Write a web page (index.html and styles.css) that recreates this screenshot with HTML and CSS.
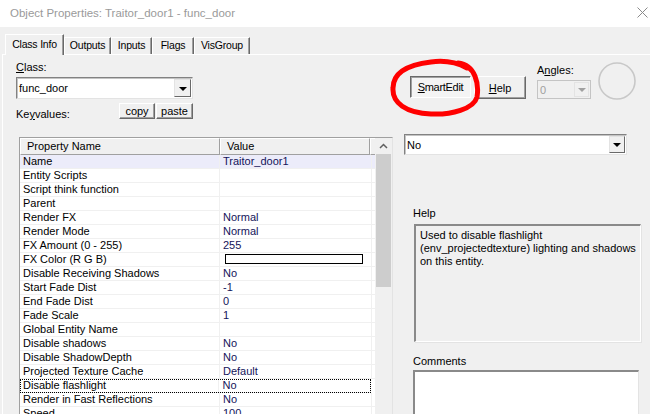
FILE: index.html
```html
<!DOCTYPE html>
<html>
<head>
<meta charset="utf-8">
<link rel="stylesheet" href="styles.css">
</head>
<body>
<div class="window">
  <div class="titlebar">
    <span class="title">Object Properties: Traitor_door1 - func_door</span>
    <svg class="close" width="11" height="11" viewBox="0 0 11 11"><path d="M0.5 0.5 L10.5 10.5 M10.5 0.5 L0.5 10.5" stroke="#8a8a8a" stroke-width="1"/></svg>
  </div>
  <div class="tabs">
    <div class="tab active t1">Class Info</div>
    <div class="tab t2">Outputs</div>
    <div class="tab t3">Inputs</div>
    <div class="tab t4">Flags</div>
    <div class="tab t5">VisGroup</div>
  </div>
  <div class="panel">
    <div class="top">
      <div class="classgroup">
        <div class="label"><u>C</u>lass:</div>
        <div class="combo classcombo">
          <span class="combo-text">func_door</span>
          <span class="combo-btn"><span class="arrow"></span></span>
        </div>
        <div class="kvrow">
          <span class="label">Ke<u>y</u>values:</span>
          <div class="kvbtns">
            <button class="btn small">copy</button>
            <button class="btn small">paste</button>
          </div>
        </div>
      </div>
      <div class="actions">
        <button class="btn pressed smartedit"><u>S</u>martEdit</button>
        <button class="btn helpbtn"><u>H</u>elp</button>
        <svg class="ring" width="100" height="65" viewBox="0 0 100 65"><path d="M72 6 C90 8 93 28 91 40 C88 52 65 58 45 57 C20 56 6 46 7 31 C7 16 20 8 45 5 C60 3 70 5 81 11" fill="none" stroke="#ff0000" stroke-width="5" stroke-linecap="round"/></svg>
      </div>
      <div class="angles">
        <div class="label">A<u>n</u>gles:</div>
        <div class="combo anglecombo">
          <span class="combo-text">0</span>
          <span class="combo-btn"><span class="arrow grey"></span></span>
        </div>
      </div>
      <svg class="dial" width="40" height="40" viewBox="0 0 40 40"><circle cx="20" cy="20" r="18" fill="none" stroke="#c8c8c8" stroke-width="1.6"/></svg>
    </div>
    <div class="bottom">
      <div class="list">
        <div class="list-body">
          <div class="list-head">
            <div class="hcell c1">Property Name</div>
            <div class="hcell c2">Value</div>
            <div class="hcell c3"></div>
          </div>
          <div class="row sel"><div class="c1">Name</div><div class="c2 v">Traitor_door1</div></div>
          <div class="row"><div class="c1">Entity Scripts</div><div class="c2 v"></div></div>
          <div class="row"><div class="c1">Script think function</div><div class="c2 v"></div></div>
          <div class="row"><div class="c1">Parent</div><div class="c2 v"></div></div>
          <div class="row"><div class="c1">Render FX</div><div class="c2 v">Normal</div></div>
          <div class="row"><div class="c1">Render Mode</div><div class="c2 v">Normal</div></div>
          <div class="row"><div class="c1">FX Amount (0 - 255)</div><div class="c2 v">255</div></div>
          <div class="row"><div class="c1">FX Color (R G B)</div><div class="c2 v"><span class="swatch"></span></div></div>
          <div class="row"><div class="c1">Disable Receiving Shadows</div><div class="c2 v">No</div></div>
          <div class="row"><div class="c1">Start Fade Dist</div><div class="c2 v">-1</div></div>
          <div class="row"><div class="c1">End Fade Dist</div><div class="c2 v">0</div></div>
          <div class="row"><div class="c1">Fade Scale</div><div class="c2 v">1</div></div>
          <div class="row"><div class="c1">Global Entity Name</div><div class="c2 v"></div></div>
          <div class="row"><div class="c1">Disable shadows</div><div class="c2 v">No</div></div>
          <div class="row"><div class="c1">Disable ShadowDepth</div><div class="c2 v">No</div></div>
          <div class="row"><div class="c1">Projected Texture Cache</div><div class="c2 v">Default</div></div>
          <div class="row focus"><div class="c1">Disable flashlight</div><div class="c2 v">No</div></div>
          <div class="row"><div class="c1">Render in Fast Reflections</div><div class="c2 v">No</div></div>
          <div class="row"><div class="c1">Speed</div><div class="c2 v">100</div></div>
        </div>
        <div class="scrollbar">
          <div class="sb-up"><svg width="9" height="6" viewBox="0 0 9 6"><path d="M1 5 L4.5 1.5 L8 5" fill="none" stroke="#606060" stroke-width="1.5"/></svg></div>
          <div class="sb-thumb"></div>
        </div>
      </div>
      <div class="side">
        <div class="combo valuecombo">
          <span class="combo-text">No</span>
          <span class="combo-btn"><span class="arrow"></span></span>
        </div>
        <div class="label sidelabel helplabel">Help</div>
        <div class="helpbox">Used to disable flashlight<br>(env_projectedtexture) lighting and shadows<br>on this entity.</div>
        <div class="label sidelabel commentslabel">Comments</div>
        <div class="comments"></div>
      </div>
    </div>
  </div>
</div>
</body>
</html>
```
FILE: styles.css
```css
* { box-sizing: border-box; }
html, body { margin: 0; padding: 0; }
body {
  width: 650px;
  height: 414px;
  overflow: hidden;
  background: #f0f0f0;
  font-family: "Liberation Sans", Arial, sans-serif;
  font-size: 11px;
  color: #000;
}
.window { width: 650px; height: 414px; overflow: hidden; }
.titlebar {
  height: 27px;
  background: #fff;
  display: flex;
  align-items: center;
  justify-content: space-between;
  padding: 0 2px 2px 10px;
}
.title { font-size: 11.5px; color: #9a9a9a; }
.close { display: block; }

.tabs {
  display: flex;
  align-items: flex-end;
  padding: 7px 0 0 5px;
  height: 27px;
}
.tab {
  height: 17px;
  line-height: 15px;
  text-align: center;
  border-top: 1px solid #fff;
  border-left: 1px solid #fff;
  border-right: 1px solid #696969;
  box-shadow: inset -1px 0 0 #a0a0a0;
  font-size: 10.5px;
  letter-spacing: -0.2px;
}
.t1 { width: 59px; }
.t2 { width: 47px; }
.t3 { width: 41px; }
.t4 { width: 42px; }
.t5 { width: 56px; }
.tab.active {
  height: 21px;
  line-height: 18px;
  margin-bottom: -1px;
  background: #f0f0f0;
  position: relative;
  z-index: 1;
}
.panel {
  border-top: 1px solid #fff;
  border-left: 1px solid #fff;
  margin-left: 2px;
  padding: 6px 0 0 13px;
}
.label { line-height: 13px; }
u { text-decoration: underline; text-underline-offset: 1px; }

.top { display: flex; align-items: flex-start; }
.classgroup { width: 177px; }
.combo {
  display: flex;
  align-items: stretch;
  background: #fff;
  border-top: 1px solid #828282;
  border-left: 1px solid #828282;
  border-right: 1px solid #e3e3e3;
  border-bottom: 1px solid #e3e3e3;
  box-shadow: inset 1px 1px 0 #c4c4c4;
}
.combo-text { flex: 1; padding: 0 2px; display: flex; align-items: center; }
.combo-btn {
  width: 17px;
  margin: 1px;
  background: #f0f0f0;
  border-top: 1px solid #e3e3e3;
  border-left: 1px solid #e3e3e3;
  border-right: 1px solid #696969;
  border-bottom: 1px solid #696969;
  display: flex;
  align-items: center;
  justify-content: center;
}
.arrow {
  width: 0; height: 0;
  border-left: 4px solid transparent;
  border-right: 4px solid transparent;
  border-top: 4px solid #000;
  margin-top: 1px;
}
.arrow.grey { border-top-color: #a0a0a0; }
.classcombo { height: 22px; margin-top: 3px; }
.kvrow {
  display: flex;
  justify-content: space-between;
  align-items: flex-start;
  margin-top: 4px;
  height: 17px;
}
.kvrow .label { margin-top: 5px; }
.kvbtns { display: flex; gap: 1px; }
.btn {
  font-family: inherit;
  font-size: 11px;
  color: #000;
  background: #f0f0f0;
  border-top: 1px solid #fff;
  border-left: 1px solid #fff;
  border-right: 1px solid #696969;
  border-bottom: 1px solid #696969;
  box-shadow: inset -1px -1px 0 #a0a0a0;
  padding: 0;
  margin: 0;
}
.btn.small { height: 16px; line-height: 13px; }
.kvbtns .btn:first-child { width: 36px; }
.kvbtns .btn:last-child { width: 37px; }

.actions {
  display: flex;
  margin-left: 217px;
  margin-top: 15px;
  gap: 3px;
  position: relative;
}
.btn.pressed {
  border-top: 1px solid #696969;
  border-left: 1px solid #696969;
  border-right: 1px solid #fff;
  border-bottom: 1px solid #fff;
  box-shadow: inset 1px 1px 0 #a0a0a0;
  background: #f4f4f4;
}
.smartedit { width: 61px; height: 22px; letter-spacing: -0.3px; }
.helpbtn { width: 52px; height: 23px; }
.ring { position: absolute; left: -24px; top: -19px; pointer-events: none; }

.angles { margin-left: 11px; margin-top: 3px; }
.anglecombo {
  margin-top: 3px;
  width: 54px;
  height: 19px;
  background: #f0f0f0;
  border-color: #c4c4c4;
  box-shadow: none;
  color: #a0a0a0;
}
.anglecombo .combo-btn { width: 15px; border-color: #e3e3e3; }
.dial { margin-left: 6px; margin-top: 0; display: block; }

.bottom { display: flex; align-items: flex-start; margin-top: 17px; }
.list {
  display: flex;
  margin-left: 3px;
  width: 374px;
  height: 300px;
  border-top: 1px solid #a0a0a0;
  border-left: 1px solid #a0a0a0;
  border-right: 1px solid #e3e3e3;
  background: #fff;
}
.list-body { width: 355px; overflow: hidden; }
.list-head { display: flex; height: 17px; background: #f0f0f0; }
.hcell {
  height: 17px;
  line-height: 15px;
  padding-left: 6px;
  border-top: 1px solid #fff;
  border-left: 1px solid #fff;
  border-right: 1px solid #a0a0a0;
  border-bottom: 1px solid #a0a0a0;
}
.hcell.c1 { width: 200px; }
.hcell.c2 { width: 150px; }
.hcell.c3 { width: 5px; padding: 0; border-right: 0; }
.row {
  display: flex;
  height: 14px;
  line-height: 13px;
  border-bottom: 1px solid #f0f0f0;
  white-space: nowrap;
}
.row .c1 { width: 200px; padding-left: 3px; border-right: 1px solid #f0f0f0; }
.row .c2 { width: 152px; padding-left: 3px; border-right: 1px solid #f0f0f0; }
.v { color: #14145a; }
.row.sel { background: #ececfa; }
.row.focus { outline: 1px dotted #000; outline-offset: -1px; width: 351px; }
.swatch {
  display: block;
  width: 138px;
  height: 10px;
  margin: 1px 0 0 2px;
  border: 1px solid #000;
  background: #fff;
}
.scrollbar {
  width: 17px;
  background: #f0f0f0;
  display: flex;
  flex-direction: column;
  align-items: center;
}
.sb-up { height: 16px; display: flex; align-items: center; justify-content: center; }
.sb-thumb { width: 15px; height: 133px; background: #cdcdcd; }

.side { margin-left: 11px; margin-top: -3px; width: 237px; }
.valuecombo { width: 223px; height: 21px; }
.valuecombo .combo-btn { width: 16px; }
.sidelabel { margin-left: 9px; }
.helplabel { margin-top: 52px; }
.helpbox {
  margin: 4px 0 0 10px;
  width: 227px;
  height: 118px;
  padding: 3px 0 0 4px;
  line-height: 13px;
  border-top: 2px solid #8a8a8a;
  border-left: 2px solid #8a8a8a;
  border-right: 1px solid #fff;
  border-bottom: 1px solid #fff;
  box-shadow: 1px 1px 0 #e3e3e3;
}
.commentslabel { margin-top: 13px; }
.comments {
  margin: 2px 0 0 9px;
  width: 226px;
  height: 60px;
  background: #fff;
  border-top: 2px solid #8a8a8a;
  border-left: 2px solid #8a8a8a;
  border-right: 1px solid #e3e3e3;
}
```
